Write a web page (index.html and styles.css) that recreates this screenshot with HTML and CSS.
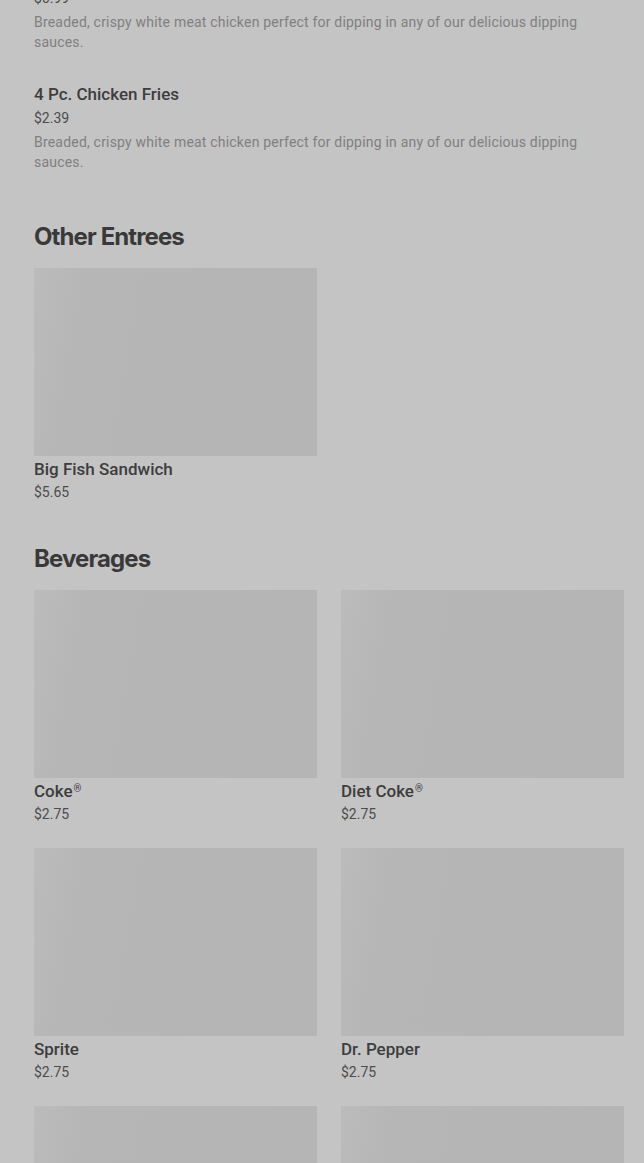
FILE: index.html
```html
<!DOCTYPE html>
<html lang="en">
<head>
<meta charset="utf-8">
<title>Menu</title>
<link rel="stylesheet" href="styles.css">
</head>
<body>
<main class="menu">
  <section class="list">
    <article class="item item-first">
      <div class="item-price">$6.99</div>
      <p class="item-desc">Breaded, crispy white meat chicken perfect for dipping in any of our delicious dipping sauces.</p>
    </article>
    <article class="item">
      <h3 class="item-name">4 Pc. Chicken Fries</h3>
      <div class="item-price">$2.39</div>
      <p class="item-desc">Breaded, crispy white meat chicken perfect for dipping in any of our delicious dipping sauces.</p>
    </article>
  </section>

  <section class="category">
    <h2 class="category-title">Other Entrees</h2>
    <div class="grid">
      <div class="card">
        <div class="card-img"></div>
        <div class="card-name">Big Fish Sandwich</div>
        <div class="card-price">$5.65</div>
      </div>
    </div>
  </section>

  <section class="category">
    <h2 class="category-title">Beverages</h2>
    <div class="grid">
      <div class="card">
        <div class="card-img"></div>
        <div class="card-name">Coke<span class="reg">®</span></div>
        <div class="card-price">$2.75</div>
      </div>
      <div class="card">
        <div class="card-img"></div>
        <div class="card-name">Diet Coke<span class="reg">®</span></div>
        <div class="card-price">$2.75</div>
      </div>
      <div class="card">
        <div class="card-img"></div>
        <div class="card-name">Sprite</div>
        <div class="card-price">$2.75</div>
      </div>
      <div class="card">
        <div class="card-img"></div>
        <div class="card-name">Dr. Pepper</div>
        <div class="card-price">$2.75</div>
      </div>
      <div class="card">
        <div class="card-img"></div>
        <div class="card-name">Hi-C<span class="reg">®</span></div>
        <div class="card-price">$2.75</div>
      </div>
      <div class="card">
        <div class="card-img"></div>
        <div class="card-name">Water</div>
        <div class="card-price">$2.75</div>
      </div>
    </div>
  </section>
</main>
</body>
</html>
```
FILE: styles.css
```css
html, body {
  margin: 0;
  padding: 0;
  background: #c4c4c4;
}
body {
  font-family: Roboto, "Liberation Sans", sans-serif;
  color: #3c3c3c;
  overflow: hidden;
}
.menu {
  padding: 0 20px 0 34px;
  margin-top: -12px;
}
.list {
  display: flex;
  flex-direction: column;
  gap: 30px;
  padding-bottom: 8px;
}
.item-name {
  margin: 0;
  font-size: 17px;
  line-height: 24px;
  font-weight: 500;
  color: #3d3d3d;
}
.item-price {
  font-size: 14px;
  line-height: 20px;
  color: #4c4c4c;
}
.item-name + .item-price {
  margin-top: 2px;
}
.item-desc {
  margin: 4px 0 0;
  font-size: 14px;
  line-height: 20px;
  letter-spacing: 0.2px;
  color: #808080;
}
.category {
  margin-top: 43px;
}
.category-title {
  margin: 0 0 17px;
  font-family: Inter, "Open Sans", sans-serif;
  font-size: 24px;
  line-height: 28px;
  font-weight: 700;
  letter-spacing: -0.9px;
  color: #393939;
}
.grid {
  display: grid;
  grid-template-columns: 283px 283px;
  column-gap: 24px;
  row-gap: 24px;
}
.card-img {
  height: 188px;
  background: linear-gradient(100deg, #bbbbbb 0%, #b6b6b6 18%, #b5b5b5 100%);
}
.card-name {
  margin-top: 3px;
  font-size: 17px;
  line-height: 20px;
  font-weight: 500;
  color: #3d3d3d;
}
.reg {
  font-size: 10px;
  line-height: 0;
  vertical-align: 5px;
  margin-left: 1px;
}
.card-price {
  margin-top: 3px;
  font-size: 14px;
  line-height: 20px;
  color: #4c4c4c;
}
```
